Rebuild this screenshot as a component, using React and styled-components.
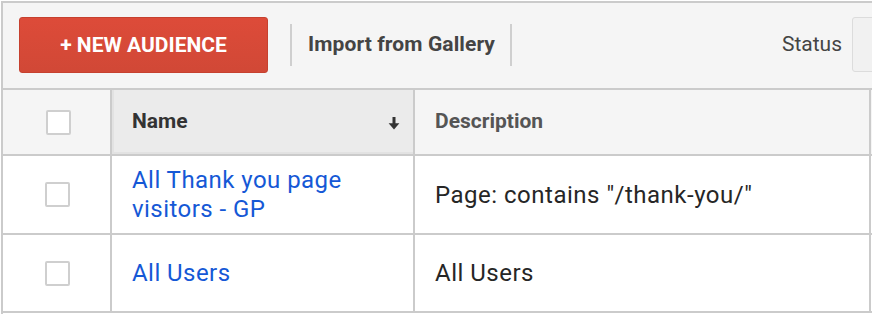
import React from "react";
import styled, { createGlobalStyle } from "styled-components";

const GlobalStyle = createGlobalStyle`
  html, body { margin: 0; padding: 0; background: #fff; }
  body { font-family: Roboto, "Liberation Sans", Arial, sans-serif; }
  * { box-sizing: border-box; }
`;

const Frame = styled.div`
  margin: 1px 0 0 1px;
  width: 871px;
  height: 313px;
  border-left: 2px solid #cbcbcb;
  border-top: 2px solid #cbcbcb;
  overflow: hidden;
`;

const Toolbar = styled.div`
  display: flex;
  align-items: center;
  height: 87px;
  padding-left: 16px;
  background: #f5f5f5;
  border-bottom: 2px solid #cbcbcb;
  width: 960px;
`;

const PrimaryButton = styled.button`
  flex: none;
  width: 249px;
  height: 56px;
  margin-top: -2px;
  border: 1px solid #c6412f;
  border-radius: 3px;
  background: linear-gradient(#dd4b39, #d14836);
  color: #fff;
  font-family: Roboto, "Liberation Sans", Arial, sans-serif;
  font-weight: 700;
  font-size: 21px;
  letter-spacing: 0;
  padding: 0;
  cursor: pointer;
`;

const Separator = styled.div`
  flex: none;
  width: 2px;
  height: 42px;
  margin-top: -2px;
  background: #cfcfcf;
  margin-left: ${(p) => p.$ml || 0}px;
`;

const ToolbarLink = styled.div`
  padding: 0 15px 0 16px;
  margin-top: -4px;
  font-size: 21px;
  font-weight: 700;
  letter-spacing: 0.1px;
  color: #444;
`;

const Spacer = styled.div`
  flex: 1;
`;

const StatusLabel = styled.div`
  font-size: 21px;
  color: #444;
  margin-top: -4px;
  margin-right: 10px;
`;

const Dropdown = styled.div`
  flex: none;
  width: 99px;
  height: 55px;
  margin-top: -2px;
  margin-right: 12px;
  border: 1px solid #dcdcdc;
  border-radius: 3px;
  background: #f1f1f1;
`;

const Row = styled.div`
  display: grid;
  grid-template-columns: 109px 303px 456px 100px;
  height: ${(p) => p.$h}px;
  width: 968px;
`;

const Cell = styled.div`
  display: flex;
  align-items: center;
  justify-content: ${(p) => (p.$center ? "center" : "flex-start")};
  padding-left: ${(p) => (p.$center ? 0 : 20)}px;
  border-right: 2px solid #cbcbcb;
  border-bottom: 2px solid #cbcbcb;
  background: ${(p) => p.$bg || "#fff"};
`;

const SortedHeader = styled(Cell)`
  background: #ebebeb;
  box-shadow: inset 2px 0 0 #e2e2e2, inset 0 -2px 0 #e2e2e2;
  justify-content: space-between;
  padding-right: 13px;
`;

const HeaderText = styled.span`
  font-size: 21px;
  font-weight: 700;
  color: ${(p) => (p.$strong ? "#333" : "#555")};
  margin-top: -2px;
`;

const Checkbox = styled.span`
  display: block;
  width: 25px;
  height: 25px;
  border: 2px solid #cfcfcf;
  border-radius: 2px;
  background: #fff;
  margin-left: ${(p) => (p.$ml == null ? 0 : p.$ml)}px;
`;

const NameLink = styled.a`
  font-size: 24px;
  line-height: 29px;
  letter-spacing: 0.45px;
  color: #1558d6;
  text-decoration: none;
  cursor: pointer;
  max-width: 250px;
`;

const CellText = styled.span`
  font-size: 24px;
  letter-spacing: 0.5px;
  color: #262626;
`;

const SortArrow = () => (
  <svg width="12" height="13" viewBox="0 0 12 13" style={{ marginTop: 2 }}>
    <rect x="4.5" y="0" width="3" height="7.5" fill="#333" />
    <path d="M0.6 6.3 L11.4 6.3 L6 12.6 Z" fill="#333" />
  </svg>
);

const rows = [
  { name: "All Thank you page visitors - GP", desc: 'Page: contains "/thank-you/"', h: 79 },
  { name: "All Users", desc: "All Users", h: 78 },
];

export default function App() {
  return (
    <>
      <GlobalStyle />
      <Frame>
        <Toolbar>
          <PrimaryButton>+ NEW AUDIENCE</PrimaryButton>
          <Separator $ml={22} />
          <ToolbarLink>Import from Gallery</ToolbarLink>
          <Separator />
          <Spacer />
          <StatusLabel>Status</StatusLabel>
          <Dropdown />
        </Toolbar>
        <Row $h={66}>
          <Cell $center $bg="#f5f5f5">
            <Checkbox $ml={4} />
          </Cell>
          <SortedHeader>
            <HeaderText $strong>Name</HeaderText>
            <SortArrow />
          </SortedHeader>
          <Cell $bg="#f5f5f5">
            <HeaderText>Description</HeaderText>
          </Cell>
          <Cell $bg="#f5f5f5" />
        </Row>
        {rows.map((r) => (
          <Row key={r.name} $h={r.h}>
            <Cell $center>
              <Checkbox $ml={1} />
            </Cell>
            <Cell>
              <NameLink>{r.name}</NameLink>
            </Cell>
            <Cell>
              <CellText>{r.desc}</CellText>
            </Cell>
            <Cell />
          </Row>
        ))}
      </Frame>
    </>
  );
}
